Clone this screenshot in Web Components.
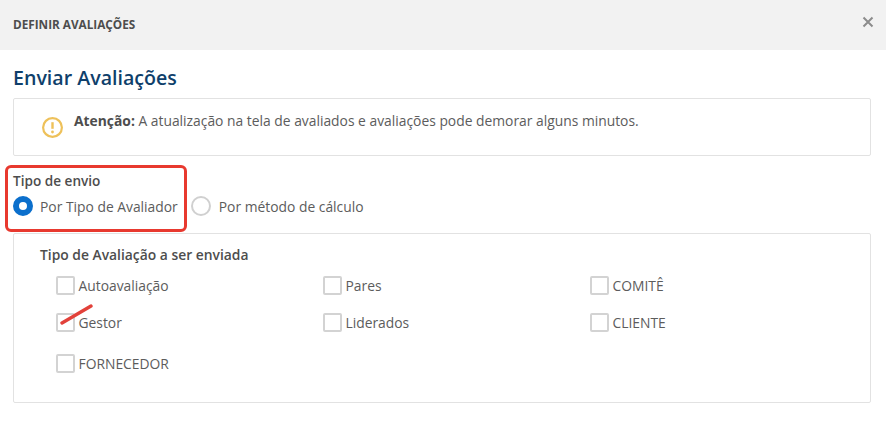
<!DOCTYPE html>
<html lang="pt">
<head>
<meta charset="utf-8">
<title>Definir Avaliações</title>
<style>
  html, body { margin: 0; background: #fff; }
  body { font-family: "Open Sans", sans-serif; color: #555; width: 886px; height: 433px; overflow: hidden; }
</style>
</head>
<body>
<modal-dialog heading="DEFINIR AVALIAÇÕES">
  <h-title>Enviar Avaliações</h-title>
  <alert-box><b>Atenção:</b> A atualização na tela de avaliados e avaliações pode demorar alguns minutos.</alert-box>
  <send-type></send-type>
  <eval-panel label="Tipo de Avaliação a ser enviada">
    <check-item>Autoavaliação</check-item>
    <check-item>Pares</check-item>
    <check-item>COMITÊ</check-item>
    <check-item marked>Gestor</check-item>
    <check-item>Liderados</check-item>
    <check-item>CLIENTE</check-item>
    <check-item>FORNECEDOR</check-item>
  </eval-panel>
</modal-dialog>

<script>
// small helper, every element here is only markup + styles
function shadow(el, html) {
  const r = el.attachShadow({ mode: 'open' });
  r.innerHTML = html;
  return r;
}

class ModalDialog extends HTMLElement {
  connectedCallback() {
    shadow(this, `
      <style>
        :host { display: block; }
        header {
          height: 50px; box-sizing: border-box; background: #f2f2f2;
          display: flex; align-items: center; justify-content: space-between;
          padding: 0 12px 3px 13px;
        }
        h1 { margin: 0; font-size: 11.75px; font-weight: 700; color: #4d4d4d; }
        svg { display: block; margin-top: -4px; }
        main { display: block; padding: 0 15px 0 13px; }
      </style>
      <header>
        <h1>${this.getAttribute('heading')}</h1>
        <svg width="12" height="12" viewBox="0 0 12 12" aria-label="Fechar">
          <path d="M1.5 1.5l9 9M10.5 1.5l-9 9" stroke="#8c8c8c" stroke-width="2" fill="none"/>
        </svg>
      </header>
      <main><slot></slot></main>`);
  }
}

class HTitle extends HTMLElement {
  connectedCallback() {
    shadow(this, `
      <style>
        :host {
          display: block; height: 48px; box-sizing: border-box; padding-top: 14px;
          font-size: 19.6px; line-height: 28px; font-weight: 600; color: #0f3f6b;
        }
      </style>
      <slot></slot>`);
  }
}

class AlertBox extends HTMLElement {
  connectedCallback() {
    shadow(this, `
      <style>
        :host {
          display: flex; height: 58px; box-sizing: border-box;
          border: 1px solid #e2e2e2; border-radius: 2px;
          padding: 11px 0 0 27px; gap: 10px;
          font-size: 13.85px; line-height: 22px; color: #5c5c5c;
        }
        svg { flex: none; margin-top: 6px; }
        ::slotted(b) { font-weight: 700; color: #4d4d4d; }
      </style>
      <svg width="23" height="23" viewBox="0 0 23 23">
        <circle cx="11.5" cy="11.5" r="9.4" fill="none" stroke="#eec15a" stroke-width="2.2"/>
        <path d="M11.5 6.2v6.6" stroke="#eec15a" stroke-width="2.4" fill="none"/>
        <circle cx="11.5" cy="16" r="1.4" fill="#eec15a"/>
      </svg>
      <div><slot></slot></div>`);
  }
}

class SendType extends HTMLElement {
  connectedCallback() {
    shadow(this, `
      <style>
        :host {
          display: block; position: relative; height: 77px; box-sizing: border-box;
          padding-top: 15px; font-size: 13.85px; color: #5c5c5c;
        }
        .lab { font-weight: 600; font-size: 13.6px; line-height: 20px; color: #4d4d4d; height: 23px; }
        .row { display: flex; align-items: center; height: 24px; }
        .radio {
          width: 20px; height: 20px; box-sizing: border-box; border-radius: 50%;
          border: 2px solid #d0d0d0; background: #fff; flex: none; margin-right: 8px;
        }
        .radio.on { border: 6px solid #0b6fcc; margin-right: 7px; }
        .radio.second { margin-left: 13px; margin-right: 8px; }
        /* red annotation drawn over the screenshot */
        .mark {
          position: absolute; left: -8px; top: 9px; width: 182px; height: 67px;
          box-sizing: border-box; border: 3px solid #e8392f; border-radius: 6px;
        }
      </style>
      <div class="lab">Tipo de envio</div>
      <div class="row">
        <span class="radio on"></span><span>Por Tipo de Avaliador</span>
        <span class="radio second"></span><span>Por método de cálculo</span>
      </div>
      <div class="mark"></div>`);
  }
}

class EvalPanel extends HTMLElement {
  connectedCallback() {
    shadow(this, `
      <style>
        :host {
          display: block; height: 170px; box-sizing: border-box;
          border: 1px solid #e2e2e2; border-radius: 2px;
          padding: 11px 0 0 26px; font-size: 13.85px; color: #5c5c5c;
        }
        .lab { font-weight: 600; line-height: 20px; color: #4d4d4d; height: 30px; }
        .grid {
          display: grid; grid-template-columns: 267px 267px 240px;
          grid-template-rows: 37px 41px 37px; padding-left: 16px;
          align-items: start;
        }
      </style>
      <div class="lab">${this.getAttribute('label')}</div>
      <div class="grid"><slot></slot></div>`);
  }
}

class CheckItem extends HTMLElement {
  connectedCallback() {
    shadow(this, `
      <style>
        :host {
          display: flex; align-items: center; gap: 3.5px; position: relative;
          height: 21px; font-size: 13.85px; color: #5c5c5c;
        }
        .box {
          width: 19px; height: 19px; box-sizing: border-box; flex: none;
          border: 2px solid #d3d3d3; border-radius: 2px; background: #fff;
        }
        /* red hand-drawn tick on top of the checkbox */
        svg { position: absolute; left: 4px; top: -8px; }
      </style>
      <span class="box"></span><span><slot></slot></span>
      ${this.hasAttribute('marked') ? `<svg width="34" height="22" viewBox="0 0 34 22">
        <path d="M2 19L31 2" stroke="#e2413a" stroke-width="3.4" stroke-linecap="round" fill="none"/>
      </svg>` : ''}`);
  }
}

customElements.define('modal-dialog', ModalDialog);
customElements.define('h-title', HTitle);
customElements.define('alert-box', AlertBox);
customElements.define('send-type', SendType);
customElements.define('eval-panel', EvalPanel);
customElements.define('check-item', CheckItem);
</script>
</body>
</html>
